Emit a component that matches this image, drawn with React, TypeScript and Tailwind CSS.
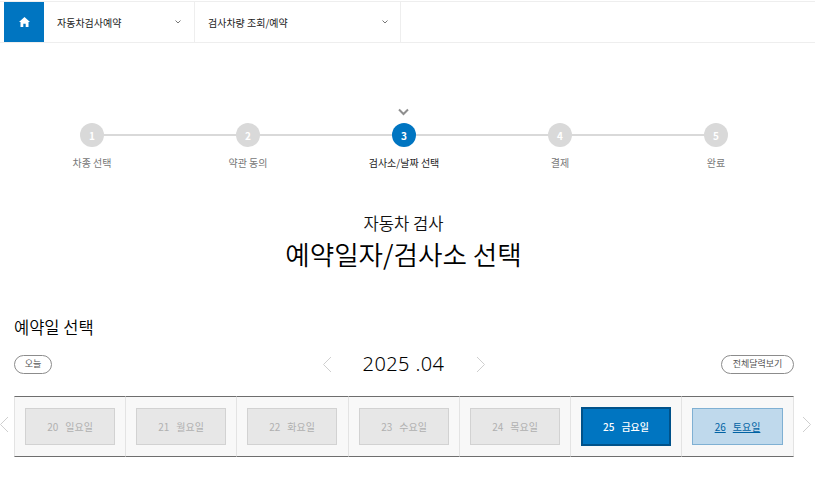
const FONT = `font-['Noto_Sans_CJK_KR','Noto_Sans',sans-serif]`

const STEPS = [
  { n: 1, label: '차종 선택' },
  { n: 2, label: '약관 동의' },
  { n: 3, label: '검사소/날짜 선택', active: true },
  { n: 4, label: '결제' },
  { n: 5, label: '완료' },
]

const DAYS = [
  { d: 20, w: '일요일', width: 'w-[111px]' },
  { d: 21, w: '월요일', width: 'w-[111px]' },
  { d: 22, w: '화요일', width: 'w-[112px]' },
  { d: 23, w: '수요일', width: 'w-[111px]' },
  { d: 24, w: '목요일', width: 'w-[111px]' },
  { d: 25, w: '금요일', width: 'w-[111px]', state: 'selected' },
  { d: 26, w: '토요일', width: 'w-[113px]', state: 'open' },
]

function Chevron({ dir }: { dir: 'left' | 'right' }) {
  return (
    <svg width="10" height="17" viewBox="0 0 10 17" fill="none" stroke="#cfcfcf" strokeWidth="1">
      <path d={dir === 'left' ? 'M9 1 1.5 8.5 9 16' : 'M1 1l7.5 7.5L1 16'} />
    </svg>
  )
}

function NavItem({ label, width, pad }: { label: string; width: string; pad: string }) {
  return (
    <div className={`${width} ${pad} flex h-full items-center justify-between border-r border-[#eeeeee] pl-[13px]`}>
      <span className="text-[10px] text-[#222222]">{label}</span>
      <svg width="6" height="4" viewBox="0 0 6 4" fill="none" stroke="#777777" strokeWidth="1">
        <path d="M.5.5 3 3 5.5.5" />
      </svg>
    </div>
  )
}

export default function App() {
  return (
    <div className={`${FONT} h-[501px] w-[815px] overflow-hidden bg-white`}>
      <div className="mt-px flex h-[42px] border-y border-[#eeeeee] pl-1">
        <div className="flex h-10 w-10 items-center justify-center bg-[#0075c1]">
          <svg width="11" height="10" viewBox="0 0 11 10" fill="white">
            <path d="M5.5 0 11 5H9.5v5H6.7V6.7H4.3V10H1.5V5H0z" />
          </svg>
        </div>
        <NavItem label="자동차검사예약" width="w-[151px]" pad="pr-[13px]" />
        <NavItem label="검사차량 조회/예약" width="w-[206px]" pad="pr-[12px]" />
      </div>

      <div className="mt-[65px] flex flex-col items-center">
        <svg width="11" height="8" viewBox="0 0 11 8" fill="none" stroke="#8f8f8f" strokeWidth="2" className="ml-[-9px]">
          <path d="M1 1.5 5.5 6 10 1.5" />
        </svg>
      </div>

      <div className="relative mt-[7px] ml-[14px] flex w-[780px]">
        <div className="absolute top-[11px] left-[78px] h-0.5 w-[624px] bg-[#d9d9d9]" />
        {STEPS.map(s => (
          <div key={s.n} className="relative flex w-[156px] flex-col items-center">
            <div
              className={`flex h-6 w-6 items-center justify-center rounded-full text-[10px] font-bold text-white ${
                s.active ? 'bg-[#0075c1]' : 'bg-[#d9d9d9]'
              }`}
            >
              {s.n}
            </div>
            <span className={`mt-[9px] text-[10px] leading-[14px] ${s.active ? 'text-[#222222]' : 'text-[#777777]'}`}>
              {s.label}
            </span>
          </div>
        ))}
      </div>

      <div className="mt-[41px] flex w-[807px] flex-col items-center">
        <p className="text-[16.6px] leading-[24px] font-[350] text-[#111111]">자동차 검사</p>
        <h1 className="text-[26.6px] leading-[38px] font-[350] text-black">예약일자/검사소 선택</h1>
      </div>

      <h2 className="mt-[42px] ml-[14px] text-[16.5px] leading-[24px] font-[350] text-black">예약일 선택</h2>

      <div className="mt-[11px] ml-[14px] flex h-7 w-[780px] items-center justify-between">
        <button className="flex h-[19px] w-[38px] items-center justify-center rounded-full border border-[#8c8c8c] text-[9px] text-[#555555]">
          오늘
        </button>
        <div className="ml-[34px] flex w-[164px] items-center justify-between">
          <Chevron dir="left" />
          <span className="font-['Noto_Sans',sans-serif] text-[20px] font-light tracking-[0.4px] text-black">2025 .04</span>
          <Chevron dir="right" />
        </div>
        <button className="flex h-[19px] w-[73px] items-center justify-center rounded-full border border-[#8c8c8c] text-[9px] text-[#555555]">
          전체달력보기
        </button>
      </div>

      <div className="relative mt-[18px] ml-[14px] flex h-[61px] w-[780px]">
        <div className="absolute top-[20px] left-[-15px]">
          <Chevron dir="left" />
        </div>
        <div className="absolute top-[20px] right-[-18px]">
          <Chevron dir="right" />
        </div>
        {DAYS.map(day => (
          <div
            key={day.d}
            className={`${day.width} flex h-full shrink-0 items-center border-y border-l border-y-[#6e6e6e] border-l-[#e3e3e3] bg-[#f8f8f8] pl-[10px] last:border-r last:border-r-[#e3e3e3]`}
          >
            {day.state === 'selected' ? (
              <button className="flex h-[39px] w-[90px] items-center justify-center gap-[7px] border-2 border-[#00528a] bg-[#0075c1] text-[10px] font-medium text-white">
                <span>{day.d}</span>
                <span>{day.w}</span>
              </button>
            ) : day.state === 'open' ? (
              <button className="flex h-[37px] w-[91px] items-center justify-center gap-[7px] border border-[#7fb0d3] bg-[#bfd9ec] text-[10px] text-[#0062a3] underline">
                <span>{day.d}</span>
                <span>{day.w}</span>
              </button>
            ) : (
              <button className="flex h-[37px] w-[90px] items-center justify-center gap-[7px] border border-[#d2d2d2] bg-[#e7e7e7] text-[10px] text-[#b0b0b0]">
                <span>{day.d}</span>
                <span>{day.w}</span>
              </button>
            )}
          </div>
        ))}
      </div>
    </div>
  )
}
